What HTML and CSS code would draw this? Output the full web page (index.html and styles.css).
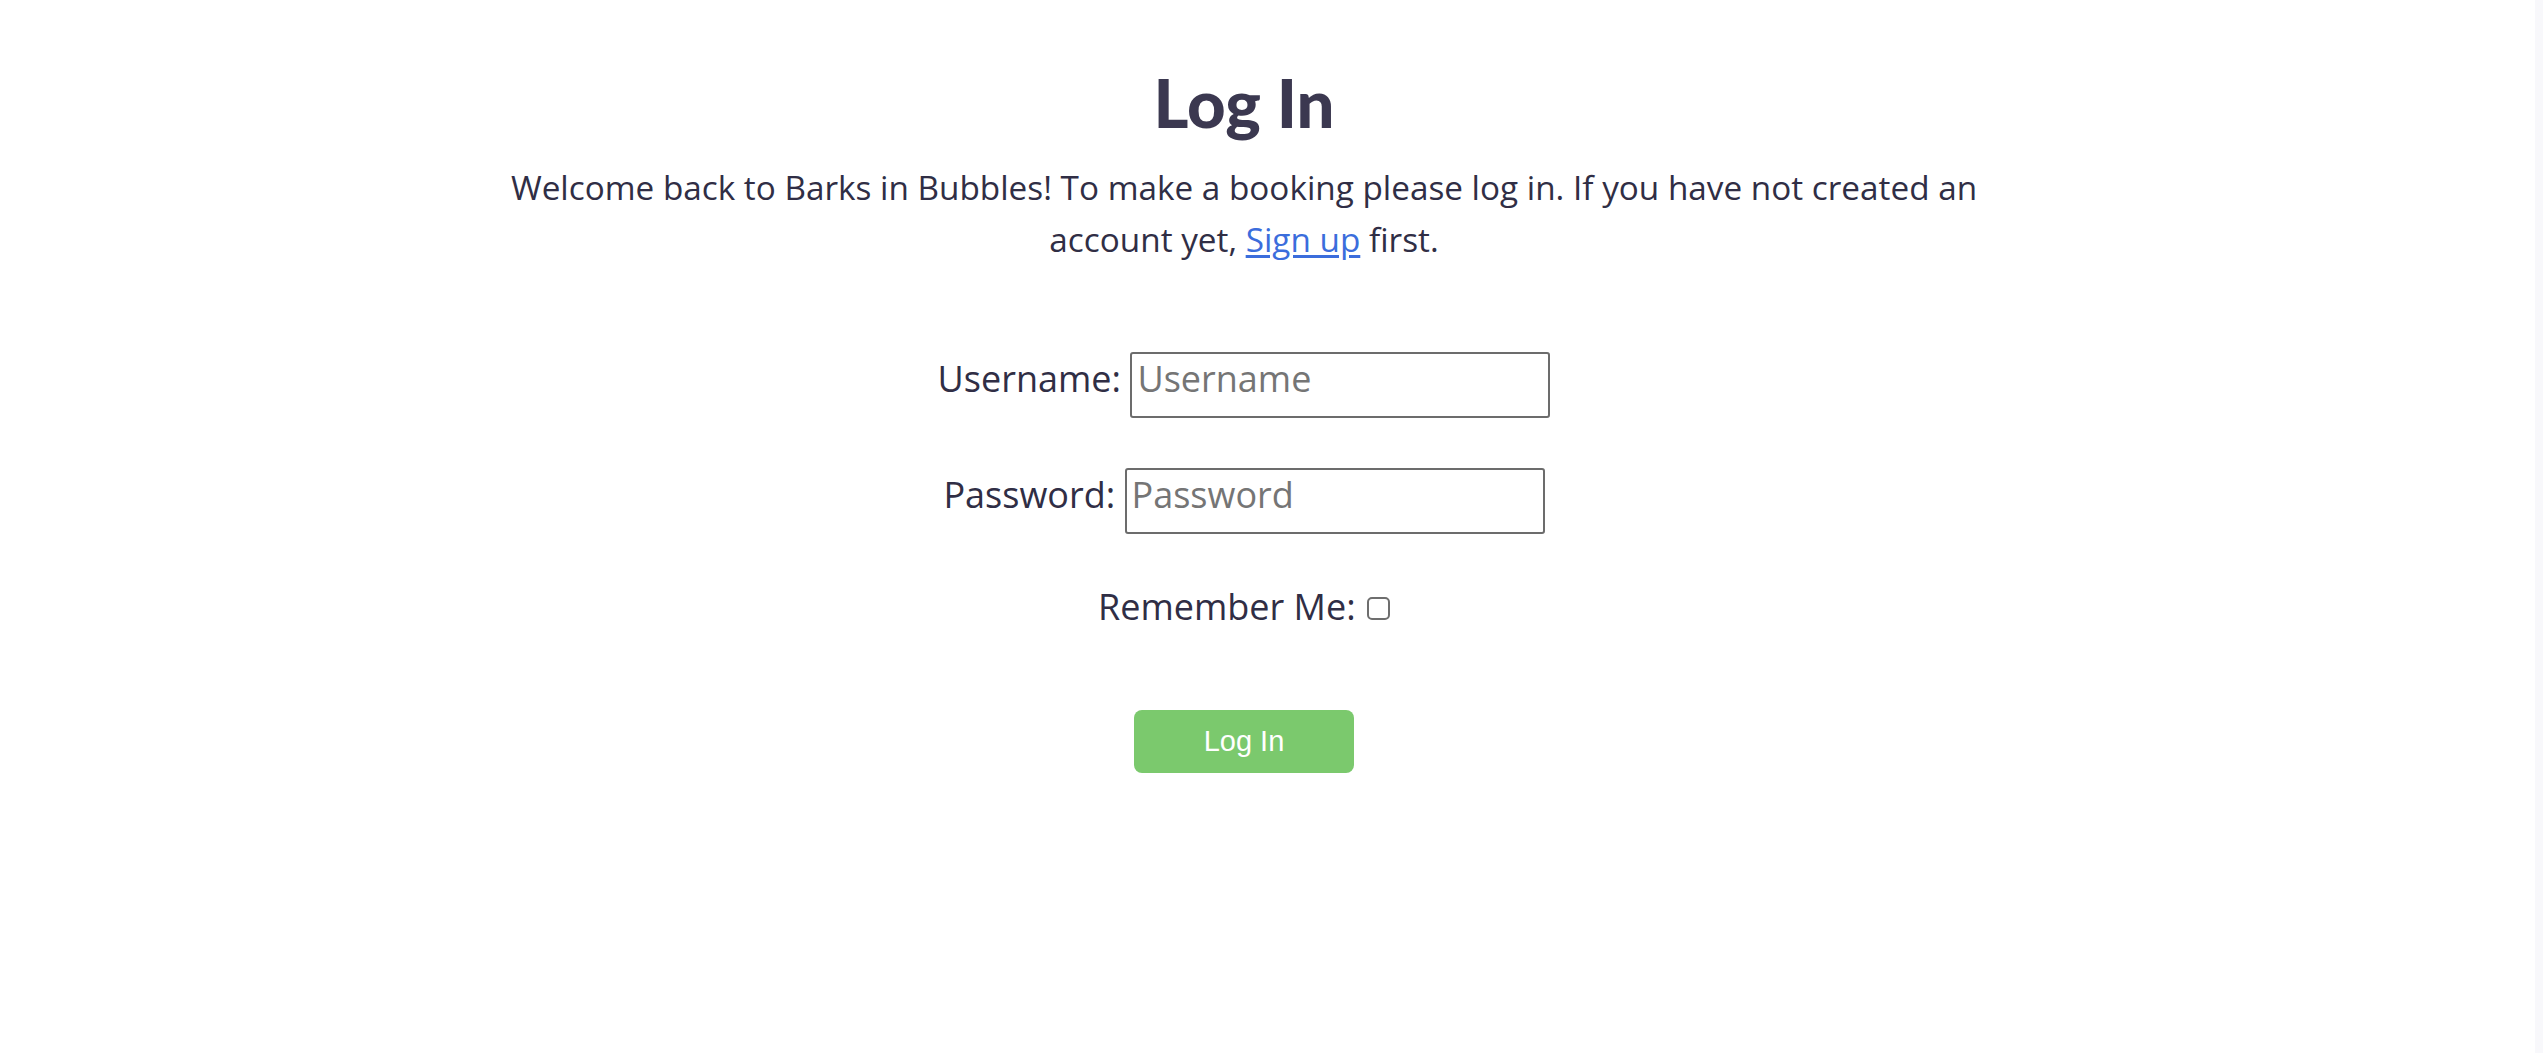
FILE: index.html
```html
<!DOCTYPE html>
<html lang="en">
<head>
<meta charset="utf-8">
<title>Log In | Barks in Bubbles</title>
<link rel="stylesheet" href="styles.css">
</head>
<body>
<div class="page">
  <main class="content">
    <h1 class="title">Log In</h1>
    <p class="intro">Welcome back to Barks in Bubbles! To make a booking please log in. If you have not created an account yet, <a class="link" href="#">Sign up</a> first.</p>
    <form class="login-form">
      <p class="row row-user"><label for="id_login">Username:</label> <input class="field field-user" type="text" id="id_login" placeholder="Username"></p>
      <p class="row row-pass"><label for="id_password">Password:</label> <input class="field field-pass" type="password" id="id_password" placeholder="Password"></p>
      <p class="row row-remember"><label for="id_remember">Remember Me:</label> <input class="check" type="checkbox" id="id_remember"></p>
      <button class="submit" type="submit">Log In</button>
    </form>
  </main>
  <div class="track"></div>
</div>
</body>
</html>
```

FILE: styles.css
```css
html, body {
  margin: 0;
  padding: 0;
  background: #ffffff;
}

body {
  font-family: "Open Sans", "Liberation Sans", sans-serif;
  color: #302e45;
}

.page {
  display: flex;
  min-height: 1053px;
}

.content {
  flex: 1;
  padding: 63px 47px 0 0;
  display: flex;
  flex-direction: column;
  align-items: center;
}

.track {
  width: 8px;
  background: #f8f8fb;
}

.title {
  margin: 0;
  font-family: Lato, "Liberation Sans", sans-serif;
  font-weight: 900;
  font-size: 67px;
  line-height: 78px;
  color: #3b3850;
}

.intro {
  margin: 20px 0 0;
  max-width: 1560px;
  text-align: center;
  font-size: 33.3px;
  line-height: 52px;
  color: #302e45;
}

.link {
  color: #3b6ddc;
  text-decoration: underline;
  text-underline-offset: 3px;
}

.login-form {
  display: flex;
  flex-direction: column;
  align-items: center;
  margin-top: 87px;
}

.row {
  margin: 0;
  font-size: 36px;
  line-height: 49px;
  color: #302e45;
  white-space: nowrap;
}

.row-pass {
  margin-top: 50px;
}

.row-remember {
  margin-top: 48px;
}

.field {
  box-sizing: border-box;
  height: 66px;
  padding: 0 5px 13px;
  border: 2px solid #6c6c6c;
  border-radius: 3px;
  font-family: "Open Sans", "Liberation Sans", sans-serif;
  font-size: 36px;
  line-height: 49px;
  color: #302e45;
  background: #ffffff;
  vertical-align: baseline;
  outline: none;
}

.field-user {
  width: 420px;
}

.field-pass {
  width: 420px;
}

.field::placeholder {
  color: #757575;
}

.check {
  -webkit-appearance: none;
  appearance: none;
  box-sizing: border-box;
  width: 23px;
  height: 23px;
  margin: 0 0 0 2px;
  border: 2px solid #6e6e6e;
  border-radius: 5px;
  background: #ffffff;
  vertical-align: baseline;
}

.submit {
  margin-top: 79px;
  width: 220px;
  height: 63px;
  border: none;
  border-radius: 8px;
  background: #7bc96d;
  color: #ffffff;
  font-family: "Liberation Sans", Arial, sans-serif;
  font-size: 29px;
  line-height: 63px;
  padding: 0;
  cursor: pointer;
}
```
